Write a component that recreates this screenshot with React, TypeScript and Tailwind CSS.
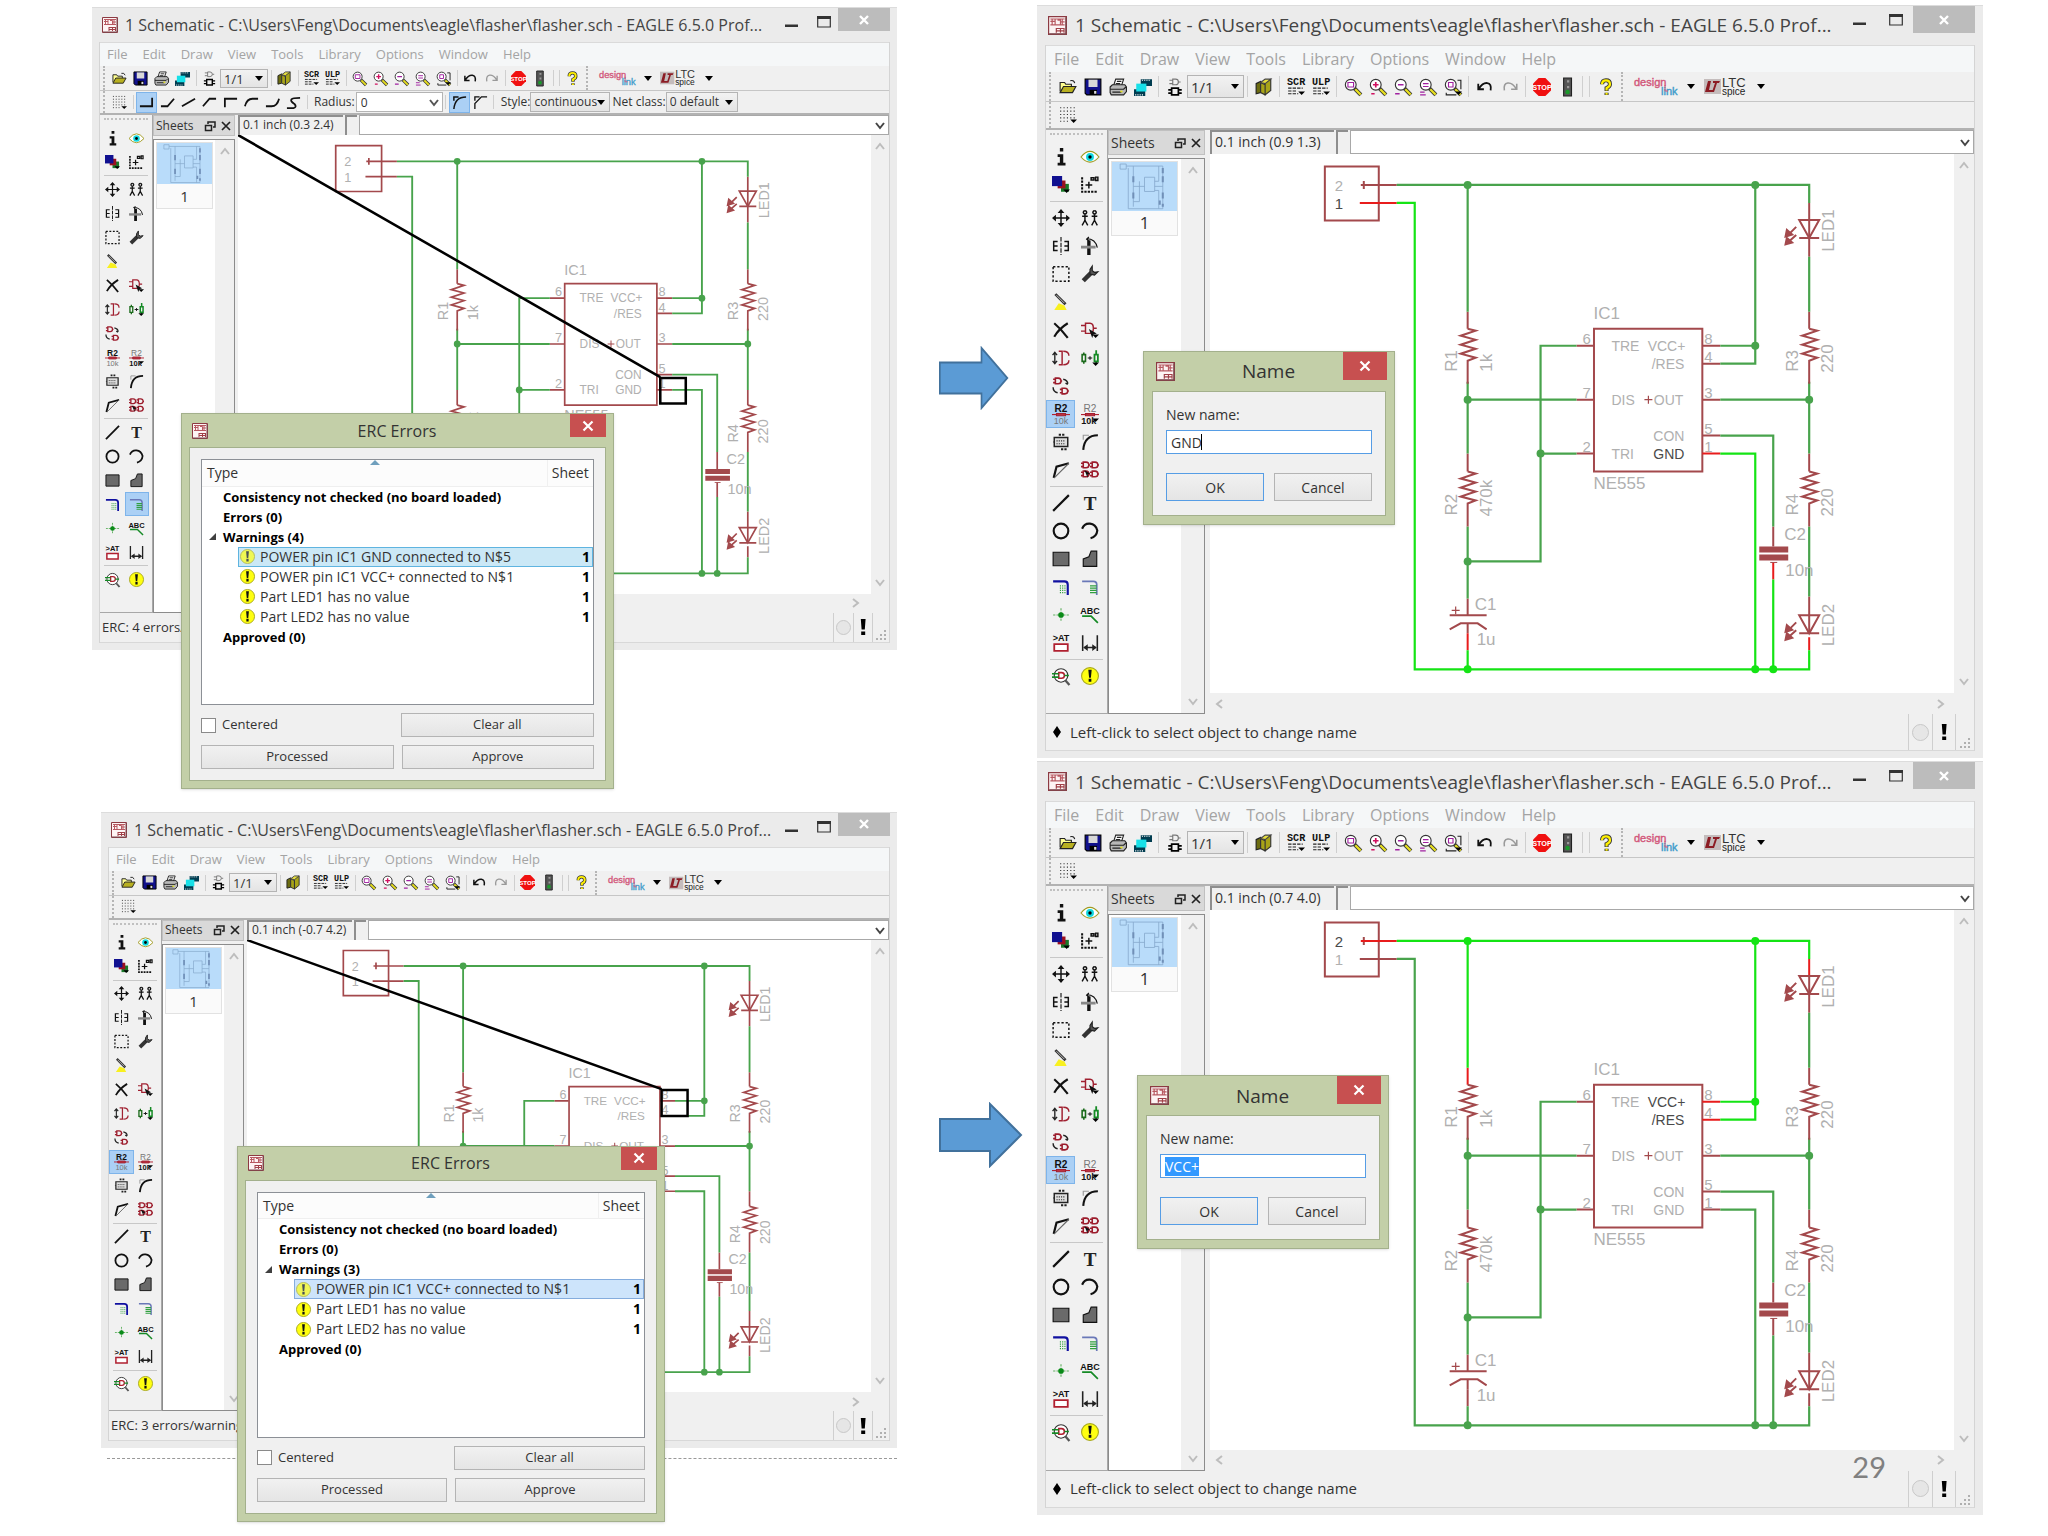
import { ReactNode, useEffect, useRef } from "react";

type Size = "sm" | "lg";
type Net = "vcc" | "gnd" | "sig";

const styles = {
  sm: {
    frame: "px-[7px] pb-[7px]",
    title: "h-[34px] text-[16px]",
    titleIcon: "size-4",
    controls: "h-[23px] w-[52px]",
    controlGap: "gap-[18px] pr-[7px]",
    menu: "h-6 gap-[15px] px-[7px] text-[13px]",
    toolbar: "h-[25px]",
    options: "h-6 text-[12px]",
    cell: "h-[21px] w-[21px]",
    icon: "size-[15px]",
    sep: "w-[6px]",
    sheetSelect: "h-[19px] w-12 text-[13px]",
    palette: "w-[53px] pt-[11px]",
    paletteCell: "h-6",
    paletteSep: "my-px",
    dock: "w-[82px]",
    dockHead: "h-[21px] text-[12px]",
    card: "w-[57px] text-[15px]",
    dockScroll: "w-[19px]",
    coordBar: "h-5 text-[12px]",
    coord: "w-[105px] leading-4",
    scrollW: "w-[18px]",
    hscroll: "h-[19px]",
    status: "h-[30px] text-[13px]",
    split: "w-[3px]",
    orb: "size-[15px]",
    statusCell: "w-5",
    gripCell: "w-4",
    logoH: "h-4"
  },
  lg: {
    frame: "px-2 pb-[7px]",
    title: "h-[39px] text-[19px]",
    titleIcon: "size-[19px]",
    controls: "h-[27px] w-[62px]",
    controlGap: "gap-[22px] pr-[10px]",
    menu: "h-[27px] gap-4 px-2 text-[16px]",
    toolbar: "h-[30px]",
    options: "h-7 text-[14px]",
    cell: "h-[25px] w-[25px]",
    icon: "size-[18px]",
    sep: "w-[7px]",
    sheetSelect: "h-[23px] w-[57px] text-[15px]",
    palette: "w-[62px] pt-[13px]",
    paletteCell: "h-7",
    paletteSep: "my-[2px]",
    dock: "w-[97px]",
    dockHead: "h-[25px] text-[14px]",
    card: "w-[67px] text-[17px]",
    dockScroll: "w-[23px]",
    coordBar: "h-6 text-[14px]",
    coord: "w-[124px] leading-5",
    scrollW: "w-5",
    hscroll: "h-[21px]",
    status: "h-[37px] text-[15px]",
    split: "w-[5px]",
    orb: "size-[17px]",
    statusCell: "w-6",
    gripCell: "w-[18px]",
    logoH: "h-[19px]"
  }
};

const menuItems = ["File", "Edit", "Draw", "View", "Tools", "Library", "Options", "Window", "Help"];

const paletteGroups: string[][] = [
  ["Info", "Show", "Display", "Mark"],
  [
    "Move", "Copy", "Mirror", "Rotate", "Group", "Change", "Paste", "", "Delete", "Add",
    "Pinswap", "Replace", "Gateswap", "", "Name", "Value", "Smash", "Miter", "Split", "Invoke"
  ],
  ["Wire", "Text", "Circle", "Arc", "Rect", "Polygon", "Bus", "Net", "Junction", "Label", "Attribute", "Dimension"],
  ["ERC check", "Errors"]
];

const dropMark = <path d="M10 12h6l-3 3z" fill="#000" stroke="none" />;

const magnifier = (
  <>
    <circle cx="6" cy="6" r="4.8" fill="#fff" stroke="#333" />
    <path d="M9.500 9.500l5.500 5.500" stroke="#333" strokeWidth="3.600" />
    <path d="M10 10l4.800 4.800" stroke="#e8e020" strokeWidth="2" />
  </>
);

const gate = (x: number, y: number) => (
  <path
    d={`M${x} ${y}v5h2.500q2.500 0 2.500-2.500t-2.500-2.500zM${x - 2} ${y + 1}h2M${x - 2} ${y + 4}h2M${x + 5} ${y + 2.5}h1`}
    stroke="#9c1c2c"
    strokeWidth="1.400"
  />
);

const icons: Record<string, ReactNode> = {
  Open: (
    <>
      <path d="M1 12V4h4l1 1.500h5V8" fill="#ffff90" stroke="#222" />
      <path d="M1 13l3-5.500h11L12 13z" fill="#b8b020" stroke="#222" />
      <path d="M10 2.500q3-1 4 2" stroke="#222" />
    </>
  ),
  Save: (
    <>
      <path d="M1 1h14v14H2.500L1 13.500z" fill="#10108c" stroke="#000" />
      <path d="M4 1.500h8V8H4z" fill="#d8d8d8" stroke="none" />
      <path d="M5 10.500h6.500V15H5z" fill="#000" stroke="none" />
      <path d="M9 11.500h2V14H9z" fill="#ddd" stroke="none" />
    </>
  ),
  Print: (
    <>
      <path d="M4 7l2-6h7l-2 6z" fill="#fff" stroke="#222" />
      <path d="M1 8l2-2h11l1.500 2v4L13 15H2l-1-2z" fill="#b8b8b8" stroke="#222" />
      <path d="M1 10h12l2-2M3 12.500h8M7 3h4M6 5h4" stroke="#222" />
      <path d="M10 12h2" stroke="#e0e020" strokeWidth="1.500" />
    </>
  ),
  Cam: (
    <>
      <path d="M6 1h10v6H6zM0 10h10v6H0z" fill="#003c50" stroke="none" />
      <path d="M2 5h9v7H2z" fill="#18e0e8" stroke="none" />
      <path d="M7 2h8M1 15h8" stroke="#fff" strokeDasharray="1 1" />
    </>
  ),
  Board: (
    <>
      <path d="M6 1v5h2.500q2.500 0 2.500-2.500T8.500 1zM3 2h3M3 5h3M11 3.500h2" stroke="#777" />
      <path d="M5 9h6v6H5zM2 10.500h3M2 13.500h3M11 10.500h3M11 13.500h3" stroke="#000" strokeWidth="1.500" />
    </>
  ),
  Library: (
    <>
      <path d="M1 5l4-2v10l-4 1z" fill="#6c6c10" stroke="#222" />
      <path d="M5 4l4 2v9l-4-2zM9 4l5-3v10l-5 4z" fill="#a8a418" stroke="#333" />
      <path d="M5 4l4-3 5 0-5 4z" fill="#e8e040" stroke="#444" />
    </>
  ),
  Script: (
    <>
      <text x="0" y="6" fontSize="9" fontWeight="700" fill="#111" stroke="none" fontFamily="Liberation Mono, monospace">SCR</text>
      <path d="M1 9h13M1 11.500h8M1 14h9" stroke="#222" strokeDasharray="3 1" />
      {dropMark}
    </>
  ),
  ULP: (
    <>
      <text x="0" y="6" fontSize="9" fontWeight="700" fill="#111" stroke="none" fontFamily="Liberation Mono, monospace">ULP</text>
      <path d="M1 9h13M1 11.500h8M1 14h9" stroke="#222" strokeDasharray="3 1" />
      {dropMark}
    </>
  ),
  "Zoom fit": <>{magnifier}<path d="M3.500 4h5v4h-5z" stroke="#a020a0" /></>,
  "Zoom in": <>{magnifier}<path d="M3.500 6h5M6 3.500v5M2 14h3" stroke="#d01060" strokeWidth="1.500" /></>,
  "Zoom out": <>{magnifier}<path d="M3.500 6h5M1 14h4" stroke="#a020a0" strokeWidth="1.400" /></>,
  Redraw: <>{magnifier}<path d="M3.500 5h5M3.500 7.500h5M1 12.500h4M1 15h5" stroke="#a020a0" /></>,
  "Zoom select": (
    <>
      <path d="M12 2h3v8M2 13v2h9" stroke="#222" />
      {magnifier}
      <path d="M4 4h4v4H4z" stroke="#a020a0" />
      {dropMark}
    </>
  ),
  Undo: <path d="M2 5v5h5M2.500 9.500Q6 4 10 4.500T13 11" stroke="#111" strokeWidth="1.600" />,
  Redo: <path d="M14 5v5H9M13.500 9.500Q10 4 6 4.500T3 11" stroke="#999" strokeWidth="1.400" />,
  Stop: (
    <>
      <path d="M5 0h6l5 5v6l-5 5H5l-5-5V5z" fill="#f01010" stroke="none" />
      <text x="8" y="10.800" textAnchor="middle" fontSize="6.500" fontWeight="700" fill="#fff" stroke="none" fontFamily="Liberation Sans, sans-serif">STOP</text>
    </>
  ),
  Go: (
    <>
      <path d="M5 0h7v16H5z" fill="#555" stroke="#222" />
      <path d="M8 2h2v2H8zM8 7h2v2H8z" fill="#999" stroke="none" />
      <circle cx="8.500" cy="12.500" r="2" fill="#1a9a2a" stroke="none" />
    </>
  ),
  Help: (
    <>
      <path d="M4.500 5.500Q4.500 2 8 2t3.500 3.500Q11.500 7.500 8.500 9v2.500M8.500 13v2" stroke="#333" strokeWidth="3.600" />
      <path d="M4.500 5.500Q4.500 2 8 2t3.500 3.500Q11.500 7.500 8.500 9v2M8.500 13.200v1.600" stroke="#fff000" strokeWidth="2" />
    </>
  ),
  Grid: (
    <>
      <path d="M1 1.500h14M1 4.500h14M1 7.500h14M1 10.500h14M1 13.500h9" stroke="#333" strokeDasharray="1 2" />
      {dropMark}
    </>
  ),
  Info: <path d="M7 0h3v3H7zM5 5.500h5V13h2v2.500H5V13h2V8H5z" fill="#111" stroke="none" />,
  Show: (
    <>
      <path d="M0 8q8-10 16 0-8 9-16 0z" fill="#fff" stroke="#a09a20" />
      <circle cx="8" cy="8" r="3.500" fill="#10d8e0" stroke="none" />
      <circle cx="8" cy="8" r="1.500" fill="#000" stroke="none" />
    </>
  ),
  Display: (
    <>
      <path d="M8 7h7v7H8z" fill="#187828" stroke="none" />
      <path d="M5 4h7v7H5z" fill="#9c1020" stroke="none" />
      <path d="M0 0h9v9H0z" fill="#101090" stroke="none" />
      {dropMark}
    </>
  ),
  Mark: (
    <>
      <path d="M1 1v13h14" stroke="#111" strokeWidth="1.800" strokeDasharray="2 1" />
      <path d="M4 8h6M7 5v6M9 1.500h2.500v2H9zM13 1h2v3h-2z" stroke="#111" strokeWidth="1.300" />
    </>
  ),
  Move: (
    <>
      <path d="M8 1v14M1 8h14" stroke="#111" strokeWidth="1.300" />
      <path d="M8 0l3 3.500H5zM8 16l3-3.500H5zM0 8l3.500-3v6zM16 8l-3.500-3v6z" fill="#111" stroke="none" />
    </>
  ),
  Copy: (
    <path
      d="M3.500 1.500a1.500 1.500 0 1 0 .1 0M3.500 5v5M1 6.500h5M3.500 10L1 14.500M3.500 10L6 14.500M12 1.500a1.500 1.500 0 1 0 .1 0M12 5v5M9.500 6.500h5M12 10l-2.500 4.500M12 10l2.500 4.500"
      stroke="#111"
      strokeWidth="1.300"
    />
  ),
  Mirror: (
    <>
      <path d="M5 4H1.500v8H5M1.500 8H5M11 4h3.500v8H11M14.500 8H11" stroke="#111" strokeWidth="1.300" />
      <path d="M8 0v16" stroke="#111" strokeDasharray="4 1" />
    </>
  ),
  Rotate: (
    <>
      <path d="M5.500 3h3v13h-3z" fill="#111" stroke="none" />
      <path d="M0 9h13" stroke="#888" strokeWidth="2.500" />
      <path d="M5 1.500q8 0 9.500 8M7 0L5 2l2.500 2" stroke="#111" />
    </>
  ),
  Group: <path d="M1 1.500h14v13H1z" stroke="#111" strokeWidth="1.300" strokeDasharray="2 1.700" />,
  Change: (
    <>
      <path d="M2 14l7-7" stroke="#333" strokeWidth="4" />
      <path d="M10 1L8 4v4l4 1 3-3-3 .500-2-1.500z" fill="#555" stroke="#222" />
    </>
  ),
  Paste: (
    <>
      <path d="M6 9l5 2 2 4H2z" fill="#f8f020" stroke="none" />
      <path d="M3 1l9 9" stroke="#333" strokeWidth="2.500" />
      <path d="M4 2l7 7" stroke="#ccc" strokeWidth=".8" />
    </>
  ),
  Delete: <path d="M2 2q6 5 12 13M14 2Q6 7 2 14" stroke="#111" strokeWidth="1.900" />,
  Add: (
    <>
      <path d="M4 2v9h4q3 0 3-4.500T8 2zM0 4h4M0 9h4M11 6.500h3" stroke="#a02030" strokeWidth="1.300" />
      <path d="M7 7l7 4-3 1-1 3z" fill="#111" stroke="none" />
      {dropMark}
    </>
  ),
  Pinswap: (
    <>
      <path d="M2.500 3v10M.5 5.500l2-2.500 2 2.500M.5 10.500l2 2.500 2-2.500" stroke="#222" strokeWidth="1.200" />
      <path d="M6 2h3v12H6M10 2q5 0 5 4M10 14q5 0 5-4" stroke="#a02030" strokeWidth="1.300" />
    </>
  ),
  Replace: (
    <>
      <path d="M1 5h3v6H1zM2.500 3v2M2.500 11v2" stroke="#1a6a1a" strokeWidth="1.400" />
      <path d="M6 8h4M8 6.500v3" stroke="#111" />
      <path d="M12 5h3v6h-3zM13.500 1v4M13.500 11v2" stroke="#158a25" strokeWidth="1.600" />
      {dropMark}
    </>
  ),
  Gateswap: (
    <>
      {gate(3, 1)}
      {gate(9, 10)}
      <path d="M10 2q4 1 4 4M1 9q0 4 4 5M14 6.500l-2-1" stroke="#222" strokeWidth="1.300" />
    </>
  ),
  Name: (
    <>
      <text x="8" y="6" textAnchor="middle" fontSize="9" fontWeight="700" fill="#111" stroke="none" fontFamily="Liberation Sans, sans-serif">R2</text>
      <path d="M0 8.500h16" stroke="#b02030" />
      <path d="M4 7.500h8v2H4z" fill="#c03040" stroke="#a02030" />
      <text x="8" y="17" textAnchor="middle" fontSize="8" fill="#777" stroke="none" fontFamily="Liberation Sans, sans-serif">10k</text>
    </>
  ),
  Value: (
    <>
      <text x="8" y="6" textAnchor="middle" fontSize="9" fill="#777" stroke="none" fontFamily="Liberation Sans, sans-serif">R2</text>
      <path d="M0 8.500h16" stroke="#b02030" />
      <path d="M4 7.500h8v2H4z" fill="#c03040" stroke="#a02030" />
      <text x="7" y="17" textAnchor="middle" fontSize="8" fontWeight="700" fill="#111" stroke="none" fontFamily="Liberation Sans, sans-serif">10k</text>
      {dropMark}
    </>
  ),
  Smash: (
    <>
      <path d="M2 4h12v8H2z" fill="#ddd" stroke="#222" strokeWidth="1.300" />
      <path d="M4 7h8M4 9.500h8M1 8h2" stroke="#333" strokeDasharray="1 1" />
      <path d="M6 1.500h6M8 14.500h6" stroke="#222" strokeWidth="1.800" strokeDasharray="2 1" />
    </>
  ),
  Miter: (
    <>
      <path d="M2 6V2h5" stroke="#999" />
      <path d="M15 2Q3 2 2 15" stroke="#111" strokeWidth="1.900" />
    </>
  ),
  Split: (
    <>
      <path d="M1.500 15L4 5l11-3" stroke="#111" strokeWidth="1.900" />
      <path d="M15 2L2 15" stroke="#666" />
    </>
  ),
  Invoke: (
    <>
      {gate(2, 1)}
      {gate(10, 1)}
      {gate(2, 9)}
      {gate(10, 9)}
      <path d="M3 8l5 3-2 1 0 3z" fill="#111" stroke="none" />
    </>
  ),
  Wire: <path d="M1 15L15 1" stroke="#111" strokeWidth="1.900" />,
  Text: <text x="8" y="14" textAnchor="middle" fontSize="17" fontWeight="700" fill="#222" stroke="none" fontFamily="Liberation Serif, serif">T</text>,
  Circle: <circle cx="8" cy="8" r="6.500" stroke="#111" strokeWidth="1.900" />,
  Arc: <path d="M1 6q2-5 7-4.500t6.500 6Q14 13 8.500 14.500" stroke="#111" strokeWidth="1.900" />,
  Rect: <path d="M1 2h14v12H1z" fill="#6a6a6a" stroke="#111" />,
  Polygon: <path d="M2 14.500V8l5-2 2-5h5v13.500z" fill="#6a6a6a" stroke="#111" />,
  Bus: (
    <>
      <path d="M1 3h10q3 0 3 3v9" stroke="#1010a0" strokeWidth="1.900" />
      <path d="M7 7h5M7 9h5M7 11h5M7 13h5" stroke="#30a040" strokeDasharray="1 1" />
    </>
  ),
  Net: (
    <>
      <path d="M1 3h10q3 0 3 3v9" stroke="#6a78b8" strokeWidth="1.500" />
      <path d="M8 7h6M8 9h6M8 11h6M8 13h6" stroke="#30a040" strokeWidth="1.200" />
    </>
  ),
  Junction: (
    <>
      <path d="M8 2v12M1 8h14" stroke="#60b060" strokeDasharray="2 1" />
      <circle cx="8" cy="8" r="2.500" fill="#0a8a18" stroke="none" />
    </>
  ),
  Label: (
    <>
      <text x="8" y="7" textAnchor="middle" fontSize="8" fontWeight="700" fill="#111" stroke="none" fontFamily="Liberation Sans, sans-serif">ABC</text>
      <path d="M1 9h8l6 6" stroke="#158a25" strokeWidth="1.500" />
    </>
  ),
  Attribute: (
    <>
      <text x="8" y="6" textAnchor="middle" fontSize="8" fontWeight="700" fill="#111" stroke="none" fontFamily="Liberation Sans, sans-serif">&gt;AT</text>
      <path d="M2 9h12v6H2z" fill="#fff" stroke="#b02030" strokeWidth="1.600" />
    </>
  ),
  Dimension: (
    <>
      <path d="M1.500 1v14M14.500 1v14M3 12h10" stroke="#222" strokeWidth="1.400" />
      <path d="M2 12l4-3v6zM14 12l-4-3v6z" fill="#222" stroke="none" />
    </>
  ),
  "ERC check": (
    <>
      <circle cx="8" cy="7.500" r="6" fill="#fff" stroke="#333" />
      <path d="M6 5v5h2.500q2.500 0 2.500-2.500T8.500 5z" stroke="#b02030" strokeWidth="1.400" />
      <path d="M0 6h6M0 9h6M11 7.500h4" stroke="#158a25" strokeWidth="1.400" />
      <path d="M12 12l3.500 4" stroke="#555" strokeWidth="2" />
    </>
  ),
  Errors: (
    <>
      <circle cx="8" cy="8" r="7.500" fill="#ffff10" stroke="#a8a820" />
      <path d="M6.500 2.500h3l-.7 7H7.200zM6.800 10.500h2.400v2.700H6.800z" fill="#111" stroke="none" />
    </>
  ),
  "Bend 0": <path d="M1 12h13V3" stroke="#111" strokeWidth="1.900" />,
  "Bend 1": <path d="M1 12h7l7-8" stroke="#111" strokeWidth="1.900" />,
  "Bend 2": <path d="M1 12L15 4" stroke="#111" strokeWidth="1.900" />,
  "Bend 3": <path d="M1 12l7-8h7" stroke="#111" strokeWidth="1.900" />,
  "Bend 4": <path d="M2 13V4h13" stroke="#111" strokeWidth="1.900" />,
  "Bend 5": <path d="M1 12q2-8 8-8h6" stroke="#111" strokeWidth="1.900" />,
  "Bend 6": <path d="M1 12h6q6 0 8-8" stroke="#111" strokeWidth="1.900" />,
  "Bend 7": <path d="M1 14h7q4-1 1-4.500-5-3-3-5 1-1.500 9-1.500" stroke="#111" strokeWidth="1.900" />,
  "Round miter": <path d="M15 2Q3 2 2 15M2 6V2h5" stroke="#111" strokeWidth="1.600" />,
  "Straight miter": <path d="M15 2H9L2 9v6M2 6V2h5" stroke="#111" strokeWidth="1.400" />
};

function Icon({ name, className }: { name: string; className: string }) {
  return (
    <svg viewBox="0 0 16 16" fill="none" className={`overflow-visible ${className}`} aria-hidden="true">
      {icons[name]}
    </svg>
  );
}

function AppIcon({ className }: { className: string }) {
  return (
    <svg viewBox="0 0 16 16" fill="none" className={`shrink-0 ${className}`} aria-hidden="true">
      <path d="M.5.500h15v15H.5z" fill="#fdf4f4" stroke="#8c3a42" />
      <path d="M2 4.500h4M2 7.500h12M3.500 3v4.500M6 3v4.500M8 3.500h2.500v4M10.500 5h3.500M12 2.500v5M2 2.500h12" stroke="#b85a62" />
      <path d="M7 10.500h7M7 12.500h7M7 10v4M10.500 10v4M13.500 10v4" stroke="#a04048" />
      <path d="M1 15h14V1" stroke="#7a4a50" />
    </svg>
  );
}

function Chevron({ dir, className }: { dir: "up" | "down" | "left" | "right"; className: string }) {
  const d = {
    up: "M2 8l4-5 4 5",
    down: "M2 4l4 5 4-5",
    left: "M8 2L3 6l5 4",
    right: "M4 2l5 4-5 4"
  }[dir];
  return (
    <svg viewBox="0 0 12 12" fill="none" className={className} aria-hidden="true">
      <path d={d} stroke="currentColor" strokeWidth="2" />
    </svg>
  );
}

function ToolButton({ name, size, active }: { name: string; size: Size; active?: boolean }) {
  const s = styles[size];
  return (
    <button
      type="button"
      aria-label={name}
      className={`flex shrink-0 items-center justify-center ${s.cell} ${active ? "border border-[#7eb4ea] bg-[#abd0f5]" : ""}`}
    >
      <Icon name={name} className={s.icon} />
    </button>
  );
}

function Sep({ size }: { size: Size }) {
  return (
    <span className={`flex shrink-0 justify-center self-stretch py-1 ${styles[size].sep}`}>
      <span className="w-px bg-[#cfcfcf]" />
    </span>
  );
}

function Handle() {
  return <span className="mx-[3px] w-[3px] shrink-0 self-stretch border-l-2 border-dotted border-[#b5b5b5]" />;
}

function Dropdown({ label, value, className }: { label: string; value: string; className: string }) {
  return (
    <span className={`relative flex shrink-0 items-center ${className}`}>
      <select
        aria-label={label}
        defaultValue={value}
        className="h-full w-full appearance-none border border-[#b4b4b4] bg-linear-to-b from-[#f2f2f2] to-[#e4e4e4] pl-[3px] text-[#333]"
      >
        <option>{value}</option>
      </select>
      <svg viewBox="0 0 8 5" className="pointer-events-none absolute right-[5px] h-[5px] w-2" aria-hidden="true">
        <path d="M0 0h8L4 5z" />
      </svg>
    </span>
  );
}

function Logos({ size }: { size: Size }) {
  const s = styles[size];
  const gap = size === "sm" ? "gap-2" : "gap-[9px]";
  const arrow = (
    <svg viewBox="0 0 8 5" className="h-[5px] w-2" aria-hidden="true">
      <path d="M0 0h8L4 5z" />
    </svg>
  );
  return (
    <div className={`flex items-center ${gap} pl-[7px]`}>
      <button type="button" aria-label="design link" className={`flex items-center ${gap}`}>
        <svg viewBox="0 0 44 19" className={`overflow-visible ${s.logoH}`} fontFamily="Liberation Sans, sans-serif">
          <text x="0" y="9" fontSize="11" fill="#d2577a" stroke="#d2577a" strokeWidth=".4">design</text>
          <text x="27" y="18" fontSize="11" fill="#3f9ccb" stroke="#3f9ccb" strokeWidth=".4">link</text>
          <path d="M31 8v6h3" stroke="#d2577a" fill="none" />
        </svg>
        {arrow}
      </button>
      <button type="button" aria-label="LTC spice" className={`flex items-center ${gap}`}>
        <svg viewBox="0 0 44 19" className={`overflow-visible ${s.logoH}`} fontFamily="Liberation Sans, sans-serif">
          <path d="M0 2h17v15H0z" fill="#c4bcbc" />
          <path d="M4 4h3L5 13h4l-1 2H1zM9 4h7l-1 2h-2l-3 9H8l3-9H9z" fill="#8c1c24" />
          <text x="18" y="10" fontSize="13" fill="#333">LTC</text>
          <text x="18" y="18" fontSize="10" fill="#222">spice</text>
        </svg>
        {arrow}
      </button>
    </div>
  );
}

function Toolbar({ size }: { size: Size }) {
  const s = styles[size];
  const group = (names: string[]) => names.map((name) => <ToolButton key={name} name={name} size={size} />);
  return (
    <div className={`flex items-center border-b border-[#c6c6c6] bg-[#f0f0f0] ${s.toolbar}`}>
      <Handle />
      {group(["Open", "Save", "Print", "Cam"])}
      <Sep size={size} />
      {group(["Board"])}
      <Dropdown label="Sheet" value="1/1" className={s.sheetSelect} />
      <Sep size={size} />
      {group(["Library"])}
      <Sep size={size} />
      {group(["Script", "ULP"])}
      <Sep size={size} />
      {group(["Zoom fit", "Zoom in", "Zoom out", "Redraw", "Zoom select"])}
      <Sep size={size} />
      {group(["Undo", "Redo"])}
      <Sep size={size} />
      {group(["Stop", "Go"])}
      <Sep size={size} />
      <Sep size={size} />
      {group(["Help"])}
      <Handle />
      <Logos size={size} />
    </div>
  );
}

function OptionsBar({ size, netOptions }: { size: Size; netOptions?: boolean }) {
  return (
    <div className={`flex items-center border-b-2 border-[#b2b2b2] bg-[#f0f0f0] text-[#333] ${styles[size].options}`}>
      <Handle />
      <ToolButton name="Grid" size={size} />
      {netOptions ? (
        <>
          <Sep size={size} />
          <ToolButton name="Bend 0" size={size} active />
          {[1, 2, 3, 4, 5, 6, 7].map((bend) => (
            <ToolButton key={bend} name={`Bend ${bend}`} size={size} />
          ))}
          <Sep size={size} />
          <label className="flex items-center gap-px pl-1">
            Radius:
            <span className="relative flex items-center">
              <input defaultValue="0" className="h-5 w-[87px] border border-[#b4b4b4] bg-white px-1 outline-none" />
              <Chevron dir="down" className="pointer-events-none absolute right-[3px] size-3 text-[#555]" />
            </span>
          </label>
          <Sep size={size} />
          <ToolButton name="Round miter" size={size} active />
          <ToolButton name="Straight miter" size={size} />
          <Sep size={size} />
          <span className="pl-1">Style:</span>
          <Dropdown label="Style" value="continuous" className="h-5 w-20" />
          <span className="pl-[2px]">Net class:</span>
          <Dropdown label="Net class" value="0 default" className="h-5 w-[72px]" />
        </>
      ) : null}
    </div>
  );
}

function Palette({ size, active }: { size: Size; active: string }) {
  const s = styles[size];
  return (
    <div className={`relative shrink-0 border-r border-b border-[#a8a8a8] bg-[#f1f1f1] ${s.palette}`}>
      <div className="absolute inset-x-1 top-[3px] border-t-2 border-dotted border-[#c0c0c0]" />
      {paletteGroups.map((names, index) => (
        <div key={index}>
          {index > 0 ? <div className={`mx-1 h-px bg-[#c8c8c8] ${s.paletteSep}`} /> : null}
          <div className="grid grid-cols-2 pr-[3px]">
            {names.map((name, i) =>
              name ? (
                <button
                  key={name}
                  type="button"
                  aria-label={name}
                  className={`flex items-center justify-center ${s.paletteCell} ${name === active ? "border border-[#7eb4ea] bg-[#abd0f5]" : ""}`}
                >
                  <Icon name={name} className={s.icon} />
                </button>
              ) : (
                <span key={i} className={s.paletteCell} />
              )
            )}
          </div>
        </div>
      ))}
    </div>
  );
}

function SheetsDock({ size }: { size: Size }) {
  const s = styles[size];
  return (
    <div className={`flex shrink-0 flex-col ${s.dock}`}>
      <div className={`flex items-center justify-between border border-[#c0c0c0] bg-[#d9d9d9] px-[2px] text-[#333] ${s.dockHead}`}>
        Sheets
        <span className="flex items-center gap-1">
          <button type="button" aria-label="Float">
            <svg viewBox="0 0 12 12" fill="none" className="size-3" aria-hidden="true">
              <path d="M4 4V2h7v5H9M1.500 5.500h6v5h-6z" stroke="#222" strokeWidth="1.500" />
            </svg>
          </button>
          <button type="button" aria-label="Close sheets">
            <svg viewBox="0 0 12 12" fill="none" className="size-3" aria-hidden="true">
              <path d="M2 2l8 8M10 2l-8 8" stroke="#222" strokeWidth="1.700" />
            </svg>
          </button>
        </span>
      </div>
      <div className="mt-[3px] flex flex-1 border border-[#8c8c8c] bg-white">
        <div className="flex-1 pt-[2px] pl-[2px]">
          <div className={`border border-[#e2e2e2] bg-[#fafafa] text-center leading-6 text-[#333] ${s.card}`}>
            <svg viewBox="0 0 64 48" fill="none" className="w-full bg-[#b9dcfa]" aria-hidden="true">
              <path
                d="M8 2h6v5H8zM14 4h36v42H16V6M21 4v40M21 24h11M27 19v20h-6M32 15h10v14H32zM42 24h8M42 19h4V4M42 28h4v18"
                stroke="#86a9cc"
                strokeWidth=".8"
              />
              <path d="M21 14v6M21 30v6M50 14v6M50 30v6M50 6v5M47 38v4M50 41v3" stroke="#7190b8" strokeWidth="2" />
            </svg>
            1
          </div>
        </div>
        <div className={`flex flex-col items-center justify-between bg-[#f0f0f0] py-[6px] text-[#bdbdbd] ${s.dockScroll}`}>
          <Chevron dir="up" className="size-3" />
          <Chevron dir="down" className="size-3" />
        </div>
      </div>
    </div>
  );
}

// Net and pin runs are kept per signal so that one whole net can be lit up.
const netPaths: Record<Net, string> = {
  vcc: "M187 31H600V49M258 31V158M546 31V210H511M546 192H511",
  gnd: "M187 49H205V516H600V497M258 497V516M511 300H546V516M564 426V516",
  sig: "M258 228V300M258 246H367M367 192H331V408H258M258 373V445M331 300H367M511 246H600M600 228V300M511 282H564V373M600 103V158M600 373V443"
};

const pinPaths: Record<Net, string> = {
  vcc: "M151 31H187M258 158V175M600 49V66M493 192H511M493 210H511",
  gnd: "M150 49H187M493 300H511M258 480V497M564 409V426M600 484V497",
  sig: "M367 192H384M367 246H384M367 300H384M493 246H511M493 282H511M154 27V35M258 445V462M258 470V480M564 373V393M600 443V480M600 66V103M600 158V175M600 300V318M258 300V318"
};

const junctions: [number, number, Net][] = [
  [258, 31, "vcc"], [546, 31, "vcc"], [546, 192, "vcc"],
  [258, 246, "sig"], [600, 246, "sig"], [331, 300, "sig"], [258, 408, "sig"],
  [258, 516, "gnd"], [546, 516, "gnd"], [564, 516, "gnd"]
];

function Resistor({ x, y }: { x: number; y: number }) {
  return (
    <path
      d={`M${x} ${y}l8 2-15 5 15 4-15 5 15 4-15 5 15 4-8 3v1M${x} ${y + 33}V${y + 55}`}
      stroke="#a3494c"
      strokeWidth="2"
    />
  );
}

function Led({ x, y }: { x: number; y: number }) {
  return (
    <>
      <path d={`M${x - 10} ${y}h20l-10 18zM${x - 10} ${y + 18}h20`} stroke="#a3494c" strokeWidth="2" />
      <path d={`M${x - 13} ${y + 7}l-9 9M${x - 13} ${y + 15}l-9 8`} stroke="#a3494c" strokeWidth="2" />
      <path d={`M${x - 25} ${y + 18}l2-10 8 7zM${x - 25} ${y + 26}l2-10 8 7z`} fill="#a3494c" />
    </>
  );
}

function Upright({ x, y, children }: { x: number; y: number; children: ReactNode }) {
  return <text transform={`translate(${x} ${y}) rotate(-90)`}>{children}</text>;
}

function Schematic({ hot, children }: { hot?: Net; children?: ReactNode }) {
  const order: Net[] = ["sig", "vcc", "gnd"];
  const lit = "#4a4a4a";
  return (
    <svg viewBox="0 0 745 540" fill="none" className="block w-full bg-white" role="img" aria-label="Flasher schematic">
      <path d="M115 12.500h54v54h-54zM384.500 175h108.500v143H384.500z" stroke="#a3494c" strokeWidth="2" />
      {order.map((net) => (
        <path key={net} d={pinPaths[net]} stroke={net === hot ? "#e81c1c" : "#a3494c"} strokeWidth="2" />
      ))}
      {order.map((net) => (
        <path key={net} d={netPaths[net]} stroke={net === hot ? "#14e414" : "#48a34c"} strokeWidth="2.200" />
      ))}
      {junctions.map(([x, y, net]) => (
        <circle key={`${x}-${y}`} cx={x} cy={y} r="4" fill={net === hot ? "#14e414" : "#48a34c"} />
      ))}
      <Resistor x={258} y={175} />
      <Resistor x={258} y={318} />
      <Resistor x={600} y={175} />
      <Resistor x={600} y={318} />
      <Led x={600} y={66} />
      <Led x={600} y={462} />
      <path d="M550 393h29v6h-29zM550 401h29v6h-29z" fill="#a3494c" />
      <path d="M561 409h7" stroke="#a3494c" />
      <path d="M240 462h37M240 476l11-6h17l9 6" stroke="#a3494c" strokeWidth="2" />
      <path d="M246 453v8M242 457h8M435 246h8M439 242v8" stroke="#a3494c" strokeWidth="1.200" />
      <g fill="#b0b0b0" fontFamily="Liberation Sans, sans-serif" fontSize="17">
        <text x="384" y="165">IC1</text>
        <text x="384" y="335">NE555</text>
        <text x="265" y="457">C1</text>
        <text x="267" y="492">1u</text>
        <text x="575" y="387">C2</text>
        <text x="576" y="423">10n</text>
        <Upright x={247} y={218}>R1</Upright>
        <Upright x={282} y={218}>1k</Upright>
        <Upright x={247} y={362}>R2</Upright>
        <Upright x={282} y={363}>470k</Upright>
        <Upright x={589} y={218}>R3</Upright>
        <Upright x={624} y={219}>220</Upright>
        <Upright x={589} y={362}>R4</Upright>
        <Upright x={624} y={363}>220</Upright>
        <Upright x={625} y={98}>LED1</Upright>
        <Upright x={625} y={493}>LED2</Upright>
      </g>
      <g fill="#b0b0b0" fontFamily="Liberation Sans, sans-serif" fontSize="15">
        <text x="125" y="37" fill={hot === "vcc" ? lit : undefined}>2</text>
        <text x="125" y="55" fill={hot === "gnd" ? lit : undefined}>1</text>
        <text x="373" y="190">6</text>
        <text x="373" y="244">7</text>
        <text x="373" y="298">2</text>
        <text x="495" y="190">8</text>
        <text x="495" y="208">4</text>
        <text x="495" y="244">3</text>
        <text x="495" y="280">5</text>
        <text x="495" y="298">1</text>
      </g>
      <g fill="#b0b0b0" fontFamily="Liberation Sans, sans-serif" fontSize="14">
        <text x="402" y="197">TRE</text>
        <text x="402" y="251">DIS</text>
        <text x="402" y="305">TRI</text>
        <g textAnchor="end">
          <text x="476" y="197" fill={hot === "vcc" ? lit : undefined}>VCC+</text>
          <text x="475" y="215" fill={hot === "vcc" ? lit : undefined}>/RES</text>
          <text x="474" y="251">OUT</text>
          <text x="475" y="287">CON</text>
          <text x="475" y="305" fill={hot === "gnd" ? lit : undefined}>GND</text>
        </g>
      </g>
      {children}
    </svg>
  );
}

type EditorWindowProps = {
  size: Size;
  coords: string;
  status: ReactNode;
  activeTool: string;
  netOptions?: boolean;
  children: ReactNode;
};

function EditorWindow({ size, coords, status, activeTool, netOptions, children }: EditorWindowProps) {
  const s = styles[size];
  return (
    <section className={`border-t border-[#dcdcdc] bg-[#ebebeb] ${s.frame}`}>
      <header className={`flex items-start ${s.title}`}>
        <div className={`flex h-full min-w-0 flex-1 items-center pl-[3px] text-[#444] ${size === "sm" ? "gap-[7px]" : "gap-2"}`}>
          <AppIcon className={s.titleIcon} />
          <h2 className="truncate">1 Schematic - C:\Users\Feng\Documents\eagle\flasher\flasher.sch - EAGLE 6.5.0 Prof...</h2>
        </div>
        <div className="flex items-start">
          <div className={`flex items-start pt-2 ${s.controlGap}`}>
            <button type="button" aria-label="Minimize">
              <svg viewBox="0 0 14 12" className="w-[14px]" aria-hidden="true">
                <path d="M0 8.500h13v2.500H0z" fill="#333" />
              </svg>
            </button>
            <button type="button" aria-label="Maximize">
              <svg viewBox="0 0 14 12" fill="none" className="w-[14px]" aria-hidden="true">
                <path d="M.7 1v10h12.600V1" stroke="#333" strokeWidth="1.200" />
                <path d="M0 1.500h14" stroke="#333" strokeWidth="3" />
              </svg>
            </button>
          </div>
          <button type="button" aria-label="Close window" className={`flex items-center justify-center bg-[#bcbcbc] ${s.controls}`}>
            <svg viewBox="0 0 12 12" className="size-3" aria-hidden="true">
              <path d="M2 2l8 8M10 2l-8 8" stroke="#fff" strokeWidth="2.400" />
            </svg>
          </button>
        </div>
      </header>
      <div className="border-x border-[#d4d4d4]">
        <nav className={`flex items-center border-t border-[#dadada] bg-[#f5f7f8] text-[#a4a4a4] ${s.menu}`}>
          {menuItems.map((item) => (
            <button key={item} type="button">{item}</button>
          ))}
        </nav>
        <Toolbar size={size} />
        <OptionsBar size={size} netOptions={netOptions} />
        <div className="flex bg-[#f0f0f0]">
          <Palette size={size} active={activeTool} />
          <SheetsDock size={size} />
          <div className={`shrink-0 ${s.split}`} />
          <div className="flex min-w-0 flex-1 flex-col">
            <div className={`flex gap-[2px] text-[#333] ${s.coordBar}`}>
              <output className={`shrink-0 border-t-2 border-l-2 border-[#8e8e8e] pl-[3px] whitespace-nowrap ${s.coord}`}>{coords}</output>
              <span className="w-3 shrink-0 border-t-2 border-l-2 border-[#8e8e8e]" />
              <span className="relative flex flex-1 items-center">
                <input aria-label="Command" className="h-full w-full border border-[#a8a8a8] bg-white px-1 outline-none" />
                <Chevron dir="down" className="pointer-events-none absolute right-[3px] size-3 text-[#444]" />
              </span>
            </div>
            <div className="flex">
              <div className="min-w-0 flex-1">{children}</div>
              <div className={`flex shrink-0 flex-col items-center justify-between py-[6px] text-[#bdbdbd] ${s.scrollW}`}>
                <Chevron dir="up" className="size-3" />
                <Chevron dir="down" className="size-3" />
              </div>
            </div>
            <div className={`flex items-center justify-between pr-7 pl-1 text-[#bdbdbd] ${s.hscroll}`}>
              <Chevron dir="left" className="size-3" />
              <Chevron dir="right" className="size-3" />
            </div>
          </div>
        </div>
        <footer className={`flex items-stretch justify-between border-b border-[#d8d8d8] bg-[#f0f0f0] text-[#333] ${s.status}`}>
          <p className="flex items-center gap-1 pl-[2px]">{status}</p>
          <div className="flex items-stretch">
            <span className={`flex items-center justify-center border-l border-[#cfcfcf] ${s.statusCell}`}>
              <span className={`rounded-full border border-[#c8c8c8] bg-[#e6e6e6] ${s.orb}`} />
            </span>
            <span className={`flex items-center justify-center border-x border-[#cfcfcf] ${s.statusCell}`}>
              <svg viewBox="0 0 8 20" className="h-4" aria-hidden="true">
                <path d="M1 0h6L6 13H2zM1.500 15.500h5V20h-5z" />
              </svg>
            </span>
            <span className={`flex items-end justify-center pb-px ${s.gripCell}`}>
              <svg viewBox="0 0 12 12" className="size-3" fill="#b0b0b0" aria-hidden="true">
                <path d="M9 1h2v2H9zM9 5h2v2H9zM5 5h2v2H5zM9 9h2v2H9zM5 9h2v2H5zM1 9h2v2H1z" />
              </svg>
            </span>
          </div>
        </footer>
      </div>
    </section>
  );
}

function DialogClose({ className }: { className: string }) {
  return (
    <button type="button" aria-label="Close dialog" className={`absolute top-0 right-[7px] flex items-center justify-center bg-[#c75050] ${className}`}>
      <svg viewBox="0 0 12 12" className="size-3" aria-hidden="true">
        <path d="M1.500 1.500l9 9M10.500 1.500l-9 9" stroke="#fff" strokeWidth="2.200" />
      </svg>
    </button>
  );
}

function ErcDialog({ warnings, tint, className }: { warnings: string[]; tint: string; className: string }) {
  const button = "h-6 flex-1 border border-[#b4b4b4] bg-linear-to-b from-[#f1f1f1] to-[#e5e5e5] text-[13px]";
  return (
    <div role="dialog" aria-label="ERC Errors" className={`absolute border border-[#a3b08c] bg-[#c3cfa8] px-[7px] pb-[7px] text-[#333] shadow-sm ${className}`}>
      <div className="flex h-[33px] items-center">
        <AppIcon className="ml-[3px] size-4" />
        <h3 className="flex-1 pr-5 text-center text-[16px]">ERC Errors</h3>
        <DialogClose className="h-[23px] w-9" />
      </div>
      <div className="border border-[#a3b08c] bg-[#f0f0f0] px-[11px] pt-[11px] pb-[11px]">
        <div className="h-[246px] border border-[#8c9096] bg-white">
          <table className="w-full text-[14px] leading-5">
            <thead>
              <tr className="border-b border-[#efefef] bg-[#fcfcfc]">
                <th className="relative h-[26px] pl-[5px] text-left font-normal">
                  Type
                  <svg viewBox="0 0 10 5" className="absolute top-0 left-[168px] w-[10px]" aria-hidden="true">
                    <path d="M0 5l5-5 5 5z" fill="#6f9fbd" />
                  </svg>
                </th>
                <th className="w-[46px] border-l border-[#f0f0f0] font-normal">Sheet</th>
              </tr>
            </thead>
            <tbody className="font-bold text-black">
              <tr>
                <td colSpan={2} className="pl-[21px] text-[13px]">Consistency not checked (no board loaded)</td>
              </tr>
              <tr>
                <td colSpan={2} className="pl-[21px] text-[13px]">Errors (0)</td>
              </tr>
              <tr>
                <td colSpan={2} className="text-[13px]">
                  <span className="flex items-center gap-[7px] pl-[7px]">
                    <svg viewBox="0 0 7 7" className="size-[7px]" aria-hidden="true">
                      <path d="M7 0v7H0z" fill="#404040" />
                    </svg>
                    Warnings ({warnings.length})
                  </span>
                </td>
              </tr>
              {warnings.map((warning, index) => (
                <tr key={warning}>
                  <td colSpan={2} className="pl-9 font-normal text-[#333]">
                    <span className={`flex items-center gap-[5px] pr-[3px] pl-[2px] ${index === 0 ? tint : ""}`}>
                      <Icon name="Errors" className={index === 0 ? "size-[15px] opacity-70" : "size-[15px]"} />
                      <span className="flex-1">{warning}</span>
                      <b className="text-black">1</b>
                    </span>
                  </td>
                </tr>
              ))}
              <tr>
                <td colSpan={2} className="pl-[21px] text-[13px]">Approved (0)</td>
              </tr>
            </tbody>
          </table>
        </div>
        <div className="mt-2 flex items-center gap-2">
          <label className="flex flex-1 items-center gap-[6px] text-[13px]">
            <input type="checkbox" className="size-[15px] appearance-none border border-[#8a8a8a] bg-white" />
            Centered
          </label>
          <button type="button" className={button}>Clear all</button>
        </div>
        <div className="mt-2 flex gap-2">
          <button type="button" className={button}>Processed</button>
          <button type="button" className={button}>Approve</button>
        </div>
      </div>
    </div>
  );
}

function NameDialog({ id, value, selected, className }: { id: string; value: string; selected?: boolean; className: string }) {
  const ref = useRef<HTMLInputElement>(null);

  useEffect(() => {
    if (selected) {
      ref.current?.focus();
      ref.current?.select();
    }
  }, [selected]);

  return (
    <div role="dialog" aria-label="Name" className={`absolute w-[252px] border border-[#a3b08c] bg-[#c3cfa8] px-2 pb-2 text-[#333] shadow-sm ${className}`}>
      <div className="flex h-[39px] items-center">
        <AppIcon className="ml-1 size-[19px]" />
        <h3 className="flex-1 pr-6 text-center text-[19px]">Name</h3>
        <DialogClose className="h-7 w-11" />
      </div>
      <div className="border border-[#a3b08c] bg-[#f0f0f0] px-[13px] pt-[11px] pb-[14px] text-[14px]">
        <label htmlFor={id} className="block leading-6">New name:</label>
        <div className="relative mt-[3px]">
          <input
            id={id}
            ref={ref}
            defaultValue={value}
            className="block h-6 w-full border border-[#569de5] bg-white px-1 outline-none selection:bg-[#3399ff] selection:text-white"
          />
          {selected ? null : <span className="absolute top-1 left-[35px] h-4 w-px bg-black" />}
        </div>
        <div className="mt-[19px] flex gap-[10px]">
          <button type="button" className="h-7 flex-1 border border-[#569de5] bg-linear-to-b from-[#f1f1f1] to-[#e5e5e5]">OK</button>
          <button type="button" className="h-7 flex-1 border border-[#b4b4b4] bg-linear-to-b from-[#f1f1f1] to-[#e5e5e5]">Cancel</button>
        </div>
      </div>
    </div>
  );
}

function StepArrow({ className }: { className: string }) {
  return (
    <svg viewBox="0 0 84 66" preserveAspectRatio="none" className={className} aria-hidden="true">
      <path d="M1 17h50V2l31 31-31 31V49H1z" fill="#5b9bd5" stroke="#41719c" strokeWidth="2" />
    </svg>
  );
}

const renameStatus = (
  <>
    <svg viewBox="0 0 8 12" className="mx-[5px] h-3 w-2" aria-hidden="true">
      <path d="M4 0l4 6-4 6-4-6z" />
    </svg>
    Left-click to select object to change name
  </>
);

export default function App() {
  return (
    <main className="grid min-h-screen grid-cols-[minmax(0,805fr)_minmax(0,140fr)_minmax(0,946fr)] items-start bg-white pr-[65px] pl-[92px] font-['Open_Sans','Noto_Sans',sans-serif]">
      <div className="flex flex-col gap-[162px] pt-[7px]">
        <div className="relative">
          <EditorWindow size="sm" coords="0.1 inch (0.3 2.4)" status="ERC: 4 errors/warnings" activeTool="Net" netOptions>
            <Schematic>
              <path d="M0 0L497 285M497 286h30v30h-30z" stroke="#000" strokeWidth="3" />
            </Schematic>
          </EditorWindow>
          <ErcDialog
            className="top-[406px] left-[89px] w-[433px]"
            tint="bg-[#cbe8f6] outline outline-[#5fb4e0] -outline-offset-1"
            warnings={[
              "POWER pin IC1 GND connected to N$5",
              "POWER pin IC1 VCC+ connected to N$1",
              "Part LED1 has no value",
              "Part LED2 has no value"
            ]}
          />
        </div>
        <div className="relative ml-[9px]">
          <EditorWindow size="sm" coords="0.1 inch (-0.7 4.2)" status="ERC: 3 errors/warnings" activeTool="Name">
            <Schematic>
              <path d="M0 0L495 178M495 179h31v31h-31z" stroke="#000" strokeWidth="3" />
            </Schematic>
          </EditorWindow>
          <div className="mt-[10px] ml-[6px] border-t border-dashed border-[#999]" />
          <ErcDialog
            className="top-[334px] left-[136px] w-[428px]"
            tint="bg-[#cde4fb] outline outline-[#84acdd] -outline-offset-1"
            warnings={["POWER pin IC1 VCC+ connected to N$1", "Part LED1 has no value", "Part LED2 has no value"]}
          />
        </div>
      </div>

      <div className="flex flex-col items-start gap-[692px] pt-[346px] pl-[42px]">
        <StepArrow className="h-16 w-[70px]" />
        <StepArrow className="h-[66px] w-[84px]" />
      </div>

      <div className="flex flex-col gap-[3px] pt-[5px]">
        <div className="relative">
          <EditorWindow size="lg" coords="0.1 inch (0.9 1.3)" status={renameStatus} activeTool="Name">
            <Schematic hot="gnd" />
          </EditorWindow>
          <NameDialog id="name-gnd" value="GND" className="top-[346px] left-[106px]" />
        </div>
        <div className="relative">
          <EditorWindow size="lg" coords="0.1 inch (0.7 4.0)" status={renameStatus} activeTool="Name">
            <Schematic hot="vcc" />
          </EditorWindow>
          <NameDialog id="name-vcc" value="VCC+" selected className="top-[314px] left-[100px]" />
          <span className="absolute right-[97px] bottom-[30px] font-[Lato,sans-serif] text-[29px] leading-9 text-[#808080]">29</span>
        </div>
      </div>
    </main>
  );
}
